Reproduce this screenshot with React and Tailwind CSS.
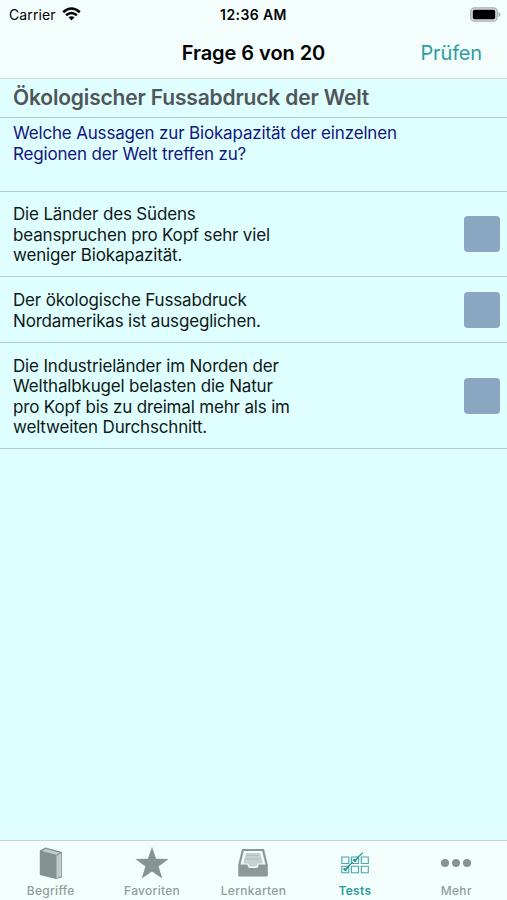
import React, { useState } from "react";

const BookIcon = () => (
  <svg width="24" height="32" viewBox="0 0 24 32">
    <path d="M.8 3.500 6.500.5 23 5v25.500L17 32 .8 28Z" fill="#83938f" />
    <path d="M3 4 6.800 1.900 20.800 5.700 17.200 7.700Z" fill="#c3cecc" />
    <path d="M17.600 8.800 22.200 6.200v23.300l-4.600 1.500Z" fill="#cbd5d3" />
    <path d="M19.800 8v22" stroke="#a4b1af" strokeWidth=".8" />
  </svg>
);

const StarIcon = () => (
  <svg width="34" height="32" viewBox="0 0 34 32">
    <path d="m17 0 4.1 11.7 12.5.3-10 7.5 3.7 12L17 24.4 6.7 31.5l3.7-12L.4 12l12.5-.3Z" fill="#869593" />
  </svg>
);

const TrayIcon = () => (
  <svg width="30" height="28" viewBox="0 0 30 28">
    <path d="M4 0h22l3.800 16v10.300q0 1.200-1.200 1.200H1.400Q.2 27.500.2 26.300V16Z" fill="#8a9997" />
    <path d="M5.800 2h18.400l3.300 13.500H20.500c0 2-1 3.500-2.500 3.500h-6c-1.500 0-2.500-1.500-2.500-3.500h-7Z" fill="#f1fbfa" />
    <path d="M8 4h14l2.800 10.500H19.500c0 2-.8 3-2 3h-5c-1.200 0-2-1-2-3H5.200Z" fill="#c6d0ce" />
    <path d="M8.500 6.500h13M7.500 10h15" stroke="#a9b6b4" strokeWidth=".7" />
  </svg>
);

const TestsIcon = () => (
  <svg width="28" height="22" viewBox="0 0 28 22" fill="none" stroke="#4ba5a9">
    <path
      d="M.8 5h7v6.500h-7ZM10.500 5h7v6.500h-7ZM20.300 5h7v6.500h-7ZM.8 14.300h7v6.500h-7ZM10.500 14.300h7v6.500h-7ZM20.300 14.300h7v6.500h-7Z"
      strokeWidth="1.100"
    />
    <path d="m12 7.500 2 2.500q3-5.500 8-9.200Q17 4 14 8.200l-1-1.200ZM2.500 17l2 2.200q3-5.500 7.500-9.200-5 3.200-7.700 7.200l-1-1Z" fill="#1f8e92" stroke="#1f8e92" strokeWidth=".9" />
  </svg>
);

const MoreIcon = () => (
  <svg width="30" height="8" viewBox="0 0 30 8" fill="#869391">
    <circle cx="4" cy="4" r="4" />
    <circle cx="15" cy="4" r="4" />
    <circle cx="26" cy="4" r="4" />
  </svg>
);

const tabs = [
  { name: "Begriffe", icon: BookIcon },
  { name: "Favoriten", icon: StarIcon },
  { name: "Lernkarten", icon: TrayIcon },
  { name: "Tests", icon: TestsIcon },
  { name: "Mehr", icon: MoreIcon },
];

const answers = [
  {
    lines: ["Die Länder des Südens", "beanspruchen pro Kopf sehr viel", "weniger Biokapazität."],
    height: "h-[84px]",
  },
  {
    lines: ["Der ökologische Fussabdruck", "Nordamerikas ist ausgeglichen."],
    height: "h-[65px]",
  },
  {
    lines: [
      "Die Industrieländer im Norden der",
      "Welthalbkugel belasten die Natur",
      "pro Kopf bis zu dreimal mehr als im",
      "weltweiten Durchschnitt.",
    ],
    height: "h-[105px]",
  },
];

const StatusBar = () => (
  <div className="grid h-7 grid-cols-3 items-center pl-[9px] pr-[6px] text-[14px]">
    <div className="flex items-center gap-[6px]">
      <span className="tracking-[0.1px]">Carrier</span>
      <svg width="19" height="14" viewBox="0 0 19 14" fill="none" stroke="#000" strokeWidth="2.500">
        <path d="M1.200 5.200Q9.500-2.200 17.800 5.200M4.100 8.300q5.400-4.600 10.800 0" />
        <path d="m9.500 13.500-3-3.200q3-2.200 6 0Z" fill="#000" stroke="none" />
      </svg>
    </div>
    <span className="-ml-[3px] text-center font-semibold tracking-[0.4px]">12:36 AM</span>
    <svg className="justify-self-end" width="31" height="15" viewBox="0 0 31 15">
      <rect x=".8" y=".8" width="26.400" height="13.400" rx="3.800" fill="#d9e0df" stroke="#a9afae" strokeWidth="1.300" />
      <rect x="2.800" y="2.800" width="22.400" height="9.400" rx="1.800" fill="#000" />
      <path d="M28.500 5q2 .8 2 2.500t-2 2.500Z" fill="#a9afae" />
    </svg>
  </div>
);

const App = () => {
  const [checked, setChecked] = useState([]);
  const [activeTab, setActiveTab] = useState("Tests");

  const toggle = (index) => {
    setChecked((prev) =>
      prev.includes(index) ? prev.filter((i) => i !== index) : [...prev, index]
    );
  };

  return (
    <div className="flex h-screen w-full flex-col overflow-hidden bg-[#dfffff] font-['Inter',sans-serif] text-black">
      <header className="h-[79px] shrink-0 border-b border-[#cddddd] bg-[#f3fdfc]">
        <StatusBar />
        <div className="grid h-[49px] grid-cols-[1fr_auto_1fr] items-center px-[25px]">
          <h1 className="col-start-2 text-xl font-semibold tracking-[-0.05px]">Frage 6 von 20</h1>
          <button className="justify-self-end text-xl tracking-[-0.15px] text-[#2f9ca0]">Prüfen</button>
        </div>
      </header>

      <main className="flex-1 text-[17px] leading-[20.400px] tracking-[-0.170px]">
        <h2 className="flex h-[39px] items-center border-b border-[#b0cccb] pl-[13px] text-[21px] font-semibold text-[#505658]">
          Ökologischer Fussabdruck der Welt
        </h2>
        <p className="h-[74px] border-b border-[#b0cccb] pl-[13px] pt-[5.400px] text-[#14147f]">
          Welche Aussagen zur Biokapazität der einzelnen
          <br />
          Regionen der Welt treffen zu?
        </p>
        {answers.map((answer, index) => (
          <div
            key={index}
            className={`flex box-content items-center justify-between border-b border-[#b0cccb] pl-[13px] pr-[7px] ${answer.height}`}
          >
            <div className="pt-[2px] text-[#101818]">
              {answer.lines.map((line) => (
                <p key={line} className="whitespace-nowrap">{line}</p>
              ))}
            </div>
            <button
              role="checkbox"
              aria-checked={checked.includes(index)}
              aria-label={answer.lines.join(" ")}
              onClick={() => toggle(index)}
              className={`size-9 rounded-[4px] ${checked.includes(index) ? "bg-[#2f9ca0]" : "bg-[#8aa6c0]"}`}
            />
          </div>
        ))}
      </main>

      <nav className="grid h-[60px] shrink-0 grid-cols-5 border-t border-[#c5d5d5] bg-[#f3fdfc]">
        {tabs.map(({ name, icon: TabIcon }) => (
          <button
            key={name}
            onClick={() => setActiveTab(name)}
            className={`flex flex-col items-center text-[12px] leading-4 tracking-[0.3px] ${
              activeTab === name ? "font-semibold text-[#2f9ca0]" : "font-medium text-[#929e9d]"
            }`}
          >
            <span className="flex h-[42px] items-center pt-[2px]">
              <TabIcon />
            </span>
            {name}
          </button>
        ))}
      </nav>
    </div>
  );
};

export default App;
